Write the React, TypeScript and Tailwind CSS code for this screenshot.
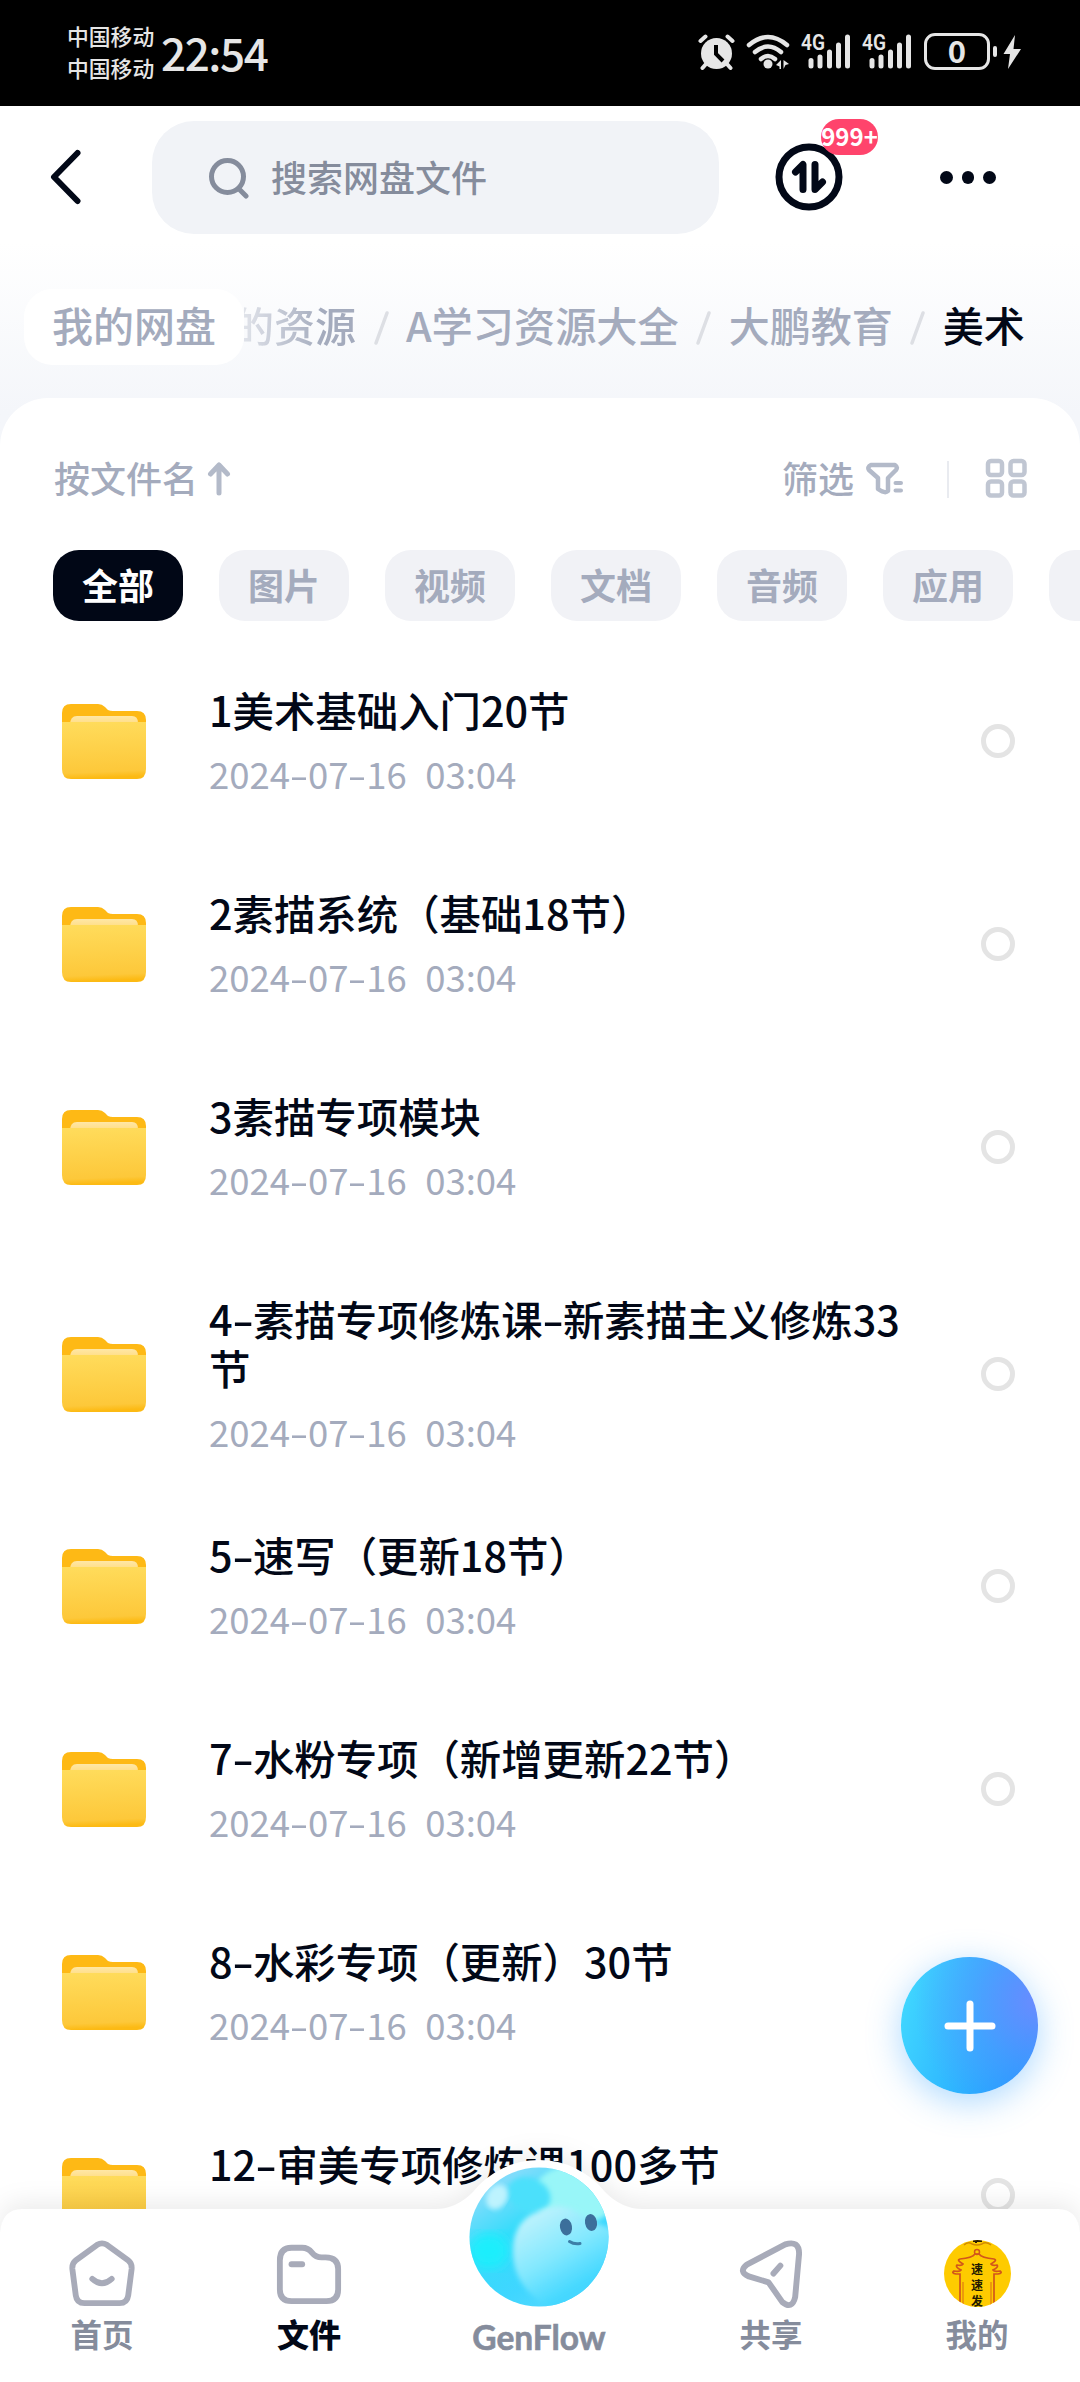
import React from 'react'

const files = [
    { name: '1美术基础入门20节' },
    { name: '2素描系统（基础18节）' },
    { name: '3素描专项模块' },
    { name: '4-素描专项修炼课-新素描主义修炼33节', tall: true },
    { name: '5-速写（更新18节）' },
    { name: '7-水粉专项（新增更新22节）' },
    { name: '8-水彩专项（更新）30节' },
    { name: '12-审美专项修炼课100多节' },
]

const chips = ['全部', '图片', '视频', '文档', '音频', '应用', '']

function Hyphens({ text }: { text: string }) {
    return (
        <>
            {text.split(/(-)/).map((part, i) =>
                part === '-' ? <span key={i} className='inline-block w-[0.49em] scale-x-150 text-center'>-</span> : part
            )}
        </>
    )
}

function FolderIcon() {
    return (
        <svg width='84' height='76' viewBox='0 0 84 76' className='shrink-0'>
            <defs>
                <linearGradient id='front' x1='0' y1='0' x2='0.06' y2='1'>
                    <stop offset='0' stopColor='#ffdc5c' />
                    <stop offset='0.9' stopColor='#fdc83a' />
                    <stop offset='1' stopColor='#fcba14' />
                </linearGradient>
                <linearGradient id='paper' x1='0' y1='0' x2='0' y2='1'>
                    <stop offset='0' stopColor='#ffe7a6' />
                    <stop offset='1' stopColor='#ffdc80' />
                </linearGradient>
            </defs>
            <path d='M0 26V10Q0 1 9 1H36Q40 1 43 4L46 7Q48 8 51 8H75Q84 8 84 17V26Z' fill='#feb915' />
            <path d='M8 22Q8 13 15 13H70Q76 13 76 20V22Z' fill='url(#paper)' />
            <path d='M0 19H84V66Q84 76 75 76H9Q0 76 0 66Z' fill='url(#front)' />
        </svg>
    )
}

function Signal() {
    return (
        <svg width='50' height='38' viewBox='0 0 50 38' className='overflow-visible'>
            <text x='0' y='17' fontSize='22' fontWeight='600' fill='#e6e6e6' textLength='24' lengthAdjust='spacingAndGlyphs' className='font-[Roboto]'>4G</text>
            <g stroke='#e6e6e6' strokeWidth='5' strokeLinecap='round'>
                <path d='M10 27.500V33' />
                <path d='M19 24V33' />
                <path d='M28.500 19V33' />
                <path d='M37.500 12V33' />
                <path d='M46.500 4V33' />
            </g>
        </svg>
    )
}

function StatusBar() {
    return (
        <div className='flex h-[106px] items-center bg-black pb-[3px] pl-[67px] text-[#e6e6e6]'>
            <div className='w-[88px] text-[21.8px] font-medium leading-[32px]'>
                <p>中国移动</p>
                <p>中国移动</p>
            </div>
            <p className='ml-[6px] w-[536px] text-[44px] font-medium leading-[50px] tracking-[-1.4px]'>22:54</p>
            <svg width='37' height='38' viewBox='0 0 37 38' className='ml-[1px]'>
                <circle cx='18.500' cy='20.500' r='15.500' fill='#e6e6e6' />
                <g fill='none' stroke='#e6e6e6' strokeWidth='4' strokeLinecap='round'>
                    <path d='M2.500 8L7.500 3.500M34.500 8L29.500 3.500M8 31L4.500 35M29 31L32.500 35' />
                </g>
                <path d='M18 12V21L25 28' fill='none' stroke='#000' strokeWidth='4' />
            </svg>
            <svg width='45' height='38' viewBox='0 0 45 38' className='ml-[11px]'>
                <g fill='none' stroke='#e6e6e6' strokeWidth='4.500' strokeLinecap='round'>
                    <path d='M3 12Q22 -4 41 12' />
                    <path d='M9 19Q22 8 35 19' />
                    <path d='M15 26Q22 20 29 26' />
                </g>
                <circle cx='22' cy='31' r='4.500' fill='#e6e6e6' />
                <path d='M35 27V36H33.500V33.500L30 32Z M37.500 36V27L43 31L39.500 32Z' fill='#e6e6e6' />
            </svg>
            <div className='ml-[10px] flex gap-[11px]'>
                <Signal />
                <Signal />
            </div>
            <div className='ml-[12px] flex h-[37px] w-[66px] items-center justify-center rounded-[11px] border-[3px] border-[#e6e6e6] pb-[5px] text-[31px] font-bold leading-none'>0</div>
            <div className='ml-[3px] h-[11px] w-[4px] rounded-full bg-[#e6e6e6]'></div>
            <svg width='18' height='36' viewBox='0 0 18 36' className='ml-[6px]'>
                <path d='M12 1L0.500 20H7L5 35L18 15H10.500Z' fill='#e6e6e6' />
            </svg>
        </div>
    )
}

function TopBar() {
    return (
        <div className='flex items-center pt-[15px] pl-[50px]'>
            <svg width='32' height='56' viewBox='0 0 32 56' fill='none' stroke='#020817' strokeWidth='6' strokeLinecap='round' strokeLinejoin='round' className='-mt-[2px]'>
                <path d='M27.500 4L4 28L27.500 52' />
            </svg>
            <div className='ml-[70px] flex h-[113px] w-[567px] items-center rounded-[42px] bg-[#f1f3f7] pl-[56px] text-[#858c9c]'>
                <svg width='42' height='42' viewBox='0 0 42 42' fill='none' stroke='currentColor' strokeWidth='5' strokeLinecap='round'>
                    <circle cx='19.500' cy='19.500' r='16' />
                    <path d='M32 33L38 39' />
                </svg>
                <span className='ml-[21px] pb-[4px] text-[36px] font-medium leading-none'>搜索网盘文件</span>
            </div>
            <div className='relative -mt-[2px] ml-[56px]'>
                <svg width='68' height='68' viewBox='0 0 68 68' fill='none' stroke='#020817'>
                    <circle cx='34' cy='34' r='30' strokeWidth='7' />
                    <g strokeWidth='7' strokeLinecap='round' strokeLinejoin='round'>
                        <path d='M20.500 29L28 21.500V46.500' />
                        <path d='M40 21.500V46.500L47.500 39' />
                    </g>
                </svg>
                <span className='absolute -top-[24px] left-[46px] flex h-[36px] w-[57px] items-center justify-center rounded-full bg-[#ff446c] pb-[2px] text-[24px] font-bold leading-none text-white'>999+</span>
            </div>
            <div className='ml-[97px] flex gap-[9px]'>
                <i className='size-[12.5px] rounded-full bg-[#020817]'></i>
                <i className='size-[12.5px] rounded-full bg-[#020817]'></i>
                <i className='size-[12.5px] rounded-full bg-[#020817]'></i>
            </div>
        </div>
    )
}

function Slash() {
    return (
        <svg width='15' height='34' viewBox='0 0 15 34' className='mx-[17.5px] mt-[2px] shrink-0'>
            <path d='M13 2L2 32' stroke='#dddfe4' strokeWidth='3.500' strokeLinecap='round' />
        </svg>
    )
}

function Breadcrumb() {
    return (
        <div className='mt-[55px] flex h-[76px] items-center pl-[24px] text-[41px] font-medium leading-none text-[#a4abbd]'>
            <div className='flex h-[76px] w-[220px] shrink-0 items-center justify-center rounded-[28px] bg-white pb-[5px]'>我的网盘</div>
            <div className='flex w-[112px] shrink-0 justify-end overflow-hidden pt-2 pb-[13px] whitespace-nowrap [mask-image:linear-gradient(to_right,rgba(0,0,0,0.3),black_70%)]'>的资源</div>
            <Slash />
            <span className='shrink-0 pb-[5px] text-[41.2px]'>A学习资源大全</span>
            <Slash />
            <span className='shrink-0 pb-[5px]'>大鹏教育</span>
            <Slash />
            <span className='shrink-0 pb-[5px] text-[#020817]'>美术</span>
        </div>
    )
}

function SortBar() {
    return (
        <div className='flex h-[42px] items-center pl-[54px] text-[36px] font-medium leading-none text-[#a4abbd]'>
            <span className='pb-[4px]'>按文件名</span>
            <svg width='24' height='36' viewBox='0 0 24 36' className='ml-[9px]' fill='none' stroke='#b3bac9' strokeWidth='5' strokeLinecap='round' strokeLinejoin='round'>
                <path d='M12 32V4M3.500 13L12 4L20.500 13' />
            </svg>
            <span className='ml-[551px] pb-[4px]'>筛选</span>
            <svg width='39' height='36' viewBox='0 0 39 36' className='ml-[12px]' fill='none' stroke='#b3bac9' strokeWidth='4.500' strokeLinecap='round' strokeLinejoin='round'>
                <path d='M5 4H29Q32 6 30 9L22 17V30Q19 33 12 28V17L3 9Q1 6 5 4Z' />
                <path d='M29.500 22H35M29.500 29.500H35' strokeWidth='4' />
            </svg>
            <div className='ml-[42px] h-[37px] w-[2px] bg-[#e9ebf0]'></div>
            <svg width='43' height='43' viewBox='0 0 43 43' className='ml-[36px]' fill='none' stroke='#c0c6d2' strokeWidth='4.500'>
                <rect x='3' y='3' width='14' height='14' rx='3' />
                <rect x='25.500' y='3' width='14' height='14' rx='3' />
                <rect x='3' y='23.500' width='14' height='14' rx='3' />
                <rect x='25.500' y='23.500' width='14' height='14' rx='3' />
            </svg>
        </div>
    )
}

function NavItem({ label, active, className, children }: { label: string, active?: boolean, className: string, children: React.ReactNode }) {
    return (
        <div className={'flex flex-col items-center ' + className}>
            <div className='flex h-[70px] items-center'>{children}</div>
            <p className={active ? 'mt-[6px] text-[32px] font-black leading-[38px] text-[#020817]' : 'mt-[6px] text-[31.5px] font-bold leading-[38px] text-[#858c9c]'}>{label}</p>
        </div>
    )
}

function GenFlowOrb() {
    return (
        <svg width='140' height='140' viewBox='0 0 140 140'>
            <defs>
                <linearGradient id='orb' x1='0.1' y1='0.2' x2='0.6' y2='1'>
                    <stop offset='0' stopColor='#7fdcfb' />
                    <stop offset='0.35' stopColor='#35dcfb' />
                    <stop offset='0.75' stopColor='#3fd6ff' />
                    <stop offset='1' stopColor='#52d8ff' />
                </linearGradient>
                <linearGradient id='face' x1='0.2' y1='0.1' x2='0.7' y2='1'>
                    <stop offset='0' stopColor='#b9f2fd' />
                    <stop offset='0.4' stopColor='#83e8fe' />
                    <stop offset='0.75' stopColor='#45d8ff' />
                    <stop offset='1' stopColor='#43d2ff' />
                </linearGradient>
                <clipPath id='orbClip'><circle cx='70' cy='70' r='69.500' /></clipPath>
                <filter id='soft'><feGaussianBlur stdDeviation='2.500' /></filter>
                <filter id='softer'><feGaussianBlur stdDeviation='6' /></filter>
            </defs>
            <g clipPath='url(#orbClip)'>
                <rect width='140' height='140' fill='url(#orb)' />
                <ellipse cx='20' cy='84' rx='20' ry='18' fill='#1beefc' filter='url(#softer)' />
                <ellipse cx='106' cy='28' rx='42' ry='30' fill='#98f6f8' filter='url(#soft)' />
                <ellipse cx='60' cy='28' rx='22' ry='17' transform='rotate(20 60 28)' fill='#4be0fb' filter='url(#soft)' />
                <path d='M44 84Q44 50 76 42Q92 36 106 44Q128 58 144 62V110L100 148Q44 130 44 84Z' fill='url(#face)' filter='url(#soft)' />
                <ellipse cx='28' cy='30' rx='10' ry='13' transform='rotate(30 28 30)' fill='#bdf3fe' filter='url(#soft)' />
            </g>
            <ellipse cx='97' cy='60' rx='6' ry='8.500' transform='rotate(-10 97 60)' fill='#3c6f9b' />
            <ellipse cx='122' cy='55.500' rx='6' ry='8.500' transform='rotate(-10 122 55.500)' fill='#3c6f9b' />
            <path d='M100.500 74.500Q105 77.500 111 76.500' fill='none' stroke='#3c7fa8' strokeWidth='3' strokeLinecap='round' />
        </svg>
    )
}

function Avatar() {
    return (
        <svg width='67' height='67' viewBox='0 0 67 67'>
            <clipPath id='avatarClip'><circle cx='33.500' cy='33.500' r='33.500' /></clipPath>
            <g clipPath='url(#avatarClip)'>
                <rect width='67' height='67' fill='#fecb00' />
                <path d='M20 5Q24 1 28 4Q33 6 38 4Q42 1 47 5' fill='none' stroke='#d28a00' strokeWidth='1.500' />
                <path d='M29 1H38M32 0V3' stroke='#2a1c00' strokeWidth='2' />
                <path d='M16 67V34H12Q7 33 10 31Q16 32 17 30Q11 27 13 25Q18 26 19 24Q12 20 16 19Q28 18 31 14H35Q38 18 50 19Q54 20 47 24Q48 26 53 25Q55 27 49 30Q50 32 56 31Q59 33 54 34H50V67' fill='none' stroke='#d2561a' strokeWidth='1.700' />
                <path d='M19 67V42M47 67V42' stroke='#e07a12' strokeWidth='1.200' />
                <circle cx='33' cy='12' r='2.500' fill='none' stroke='#d2561a' strokeWidth='1.500' />
                <g fontSize='12' fontWeight='700' fill='#221a00' textAnchor='middle'>
                    <text x='33' y='34'>速</text>
                    <text x='33' y='50'>速</text>
                    <text x='33' y='66'>发</text>
                </g>
            </g>
        </svg>
    )
}

function BottomNav() {
    return (
        <div className='absolute inset-x-0 bottom-0 h-[232px]'>
            <svg width='1080' height='232' viewBox='0 0 1080 232' className='absolute inset-0 [filter:drop-shadow(0_-6px_12px_rgba(0,0,0,0.08))]'>
                <path d='M0 232V83Q2 59 22 59H436Q456 59 473 42A84 84 0 0 1 605 42Q622 59 642 59H1058Q1078 59 1080 83V232Z' fill='#fff' />
            </svg>
            <div className='relative flex pt-[88px]'>
                <NavItem label='首页' className='ml-[61px] w-[82px]'>
                    <svg width='68' height='68' viewBox='0 0 70 70' fill='none' stroke='#a8abb9' strokeWidth='6' strokeLinecap='round' strokeLinejoin='round'>
                        <path d='M30 6Q35 3 40 6L62 22Q66 25 65.500 31L62 58Q61 66 53 66H17Q9 66 8 58L4.500 31Q4 25 8 22Z' />
                        <path d='M25 41Q35 50 45 41' />
                    </svg>
                </NavItem>
                <NavItem label='文件' active className='ml-[125px] w-[82px]'>
                    <svg width='68' height='68' viewBox='0 0 70 70' fill='none' stroke='#a8abb9' strokeWidth='6' strokeLinecap='round' strokeLinejoin='round'>
                        <path d='M5 22Q5 9 17 9H28Q34 9 38 14Q42 19 48 19H52Q65 19 65 31V52Q65 64 53 64H17Q5 64 5 52Z' />
                        <path d='M17 26H28' />
                    </svg>
                </NavItem>
                <div className='-mt-[71px] ml-[119px] flex w-[140px] flex-col items-center'>
                    <GenFlowOrb />
                    <p className="mt-[11px] font-['Lato'] text-[33.5px] font-bold leading-[38px] text-[#858c9c] [-webkit-text-stroke:0.6px_#858c9c]">GenFlow</p>
                </div>
                <NavItem label='共享' className='ml-[121px] w-[82px]'>
                    <svg width='69' height='71' viewBox='0 0 70 72' fill='none' stroke='#a8abb9' strokeWidth='6' strokeLinecap='round' strokeLinejoin='round'>
                        <path d='M10 27L49 6.500Q63 2 63 16L59 60Q56 73 46 65L32 45L12 39Q1 34 10 27Z' />
                        <path d='M37 36L44 28' />
                    </svg>
                </NavItem>
                <NavItem label='我的' className='ml-[124px] w-[82px]'>
                    <Avatar />
                </NavItem>
            </div>
        </div>
    )
}

export default function App() {
    return (
        <div className="relative h-[2382px] w-[1080px] overflow-hidden bg-white font-['Noto_Sans_CJK_SC',sans-serif]">
            <StatusBar />
            <div className='h-[340px] bg-linear-to-b from-white from-40% to-[#f4f6fa] to-90%'>
                <TopBar />
                <Breadcrumb />
            </div>
            <div className='relative -mt-[48px] rounded-t-[48px] bg-white pt-[60px]'>
                <SortBar />
                <div className='mt-[50px] flex gap-[36px] pl-[53px]'>
                    {chips.map((chip, i) => (
                        <div key={i} className={'flex h-[71px] w-[130px] shrink-0 items-center justify-center rounded-[26px] pb-[4px] text-[36px] font-bold leading-none ' + (i === 0 ? 'bg-[#010716] text-white' : 'bg-[#f1f2f6] text-[#a4abbd]')}>{chip}</div>
                    ))}
                </div>
                <div className='mt-[18px]'>
                    {files.map((file) => (
                        <div key={file.name} className={'flex items-center pl-[62px] ' + (file.tall ? 'h-[252px] -mb-[16px]' : 'h-[203px]')}>
                            <FolderIcon />
                            <div className='ml-[63px] w-[720px] pb-[3px]'>
                                <p className='text-[41.4px] font-medium leading-[49px] text-[#020817]'><Hyphens text={file.name} /></p>
                                <p className='mt-[21px] text-[36.5px] leading-[38px] [word-spacing:1px] whitespace-pre text-[#a4abbd]'><Hyphens text={'2024-07-16  03:04'} /></p>
                            </div>
                            <div className='ml-[52px] size-[34px] rounded-full border-[5px] border-[#e4e4e4]'></div>
                        </div>
                    ))}
                </div>
            </div>
            <BottomNav />
            <button className='absolute top-[1957px] left-[901px] flex size-[137px] items-center justify-center rounded-full bg-[radial-gradient(circle_at_100%_32%,#6a8cff,rgba(90,150,255,0.5)_40%,transparent_75%),linear-gradient(105deg,#43dcff,#209bff_85%)] shadow-[0_8px_34px_rgba(60,165,255,0.42)]'>
                <svg width='52' height='54' viewBox='0 0 52 54' stroke='#fff' strokeWidth='7' strokeLinecap='round'>
                    <path d='M4 27H48M26 5V49' />
                </svg>
            </button>
        </div>
    )
}
